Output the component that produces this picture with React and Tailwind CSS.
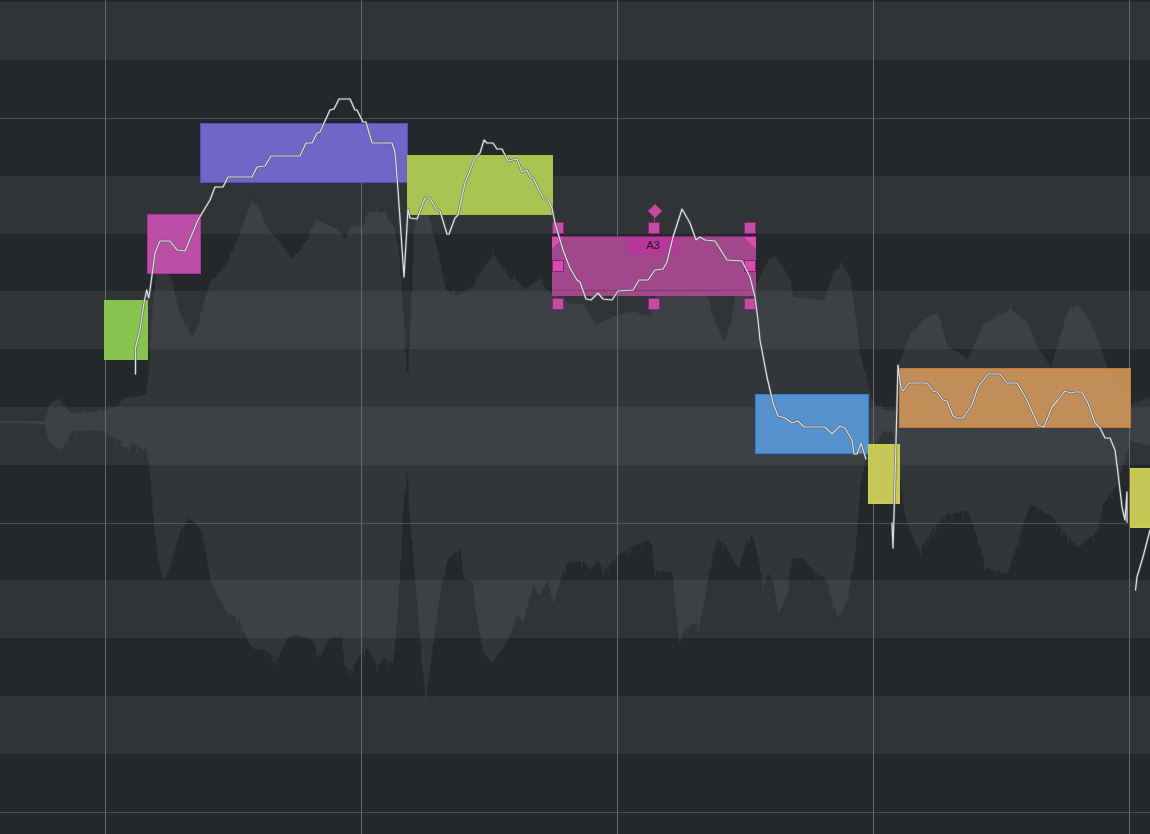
const TOP = [[0,421],[44,421],[46,412],[50,404],[58,399],[64,406],[70,414],[100,412],[105,410],[118,406],[122,399],[135,397],[145,395],[148,375],[150,340],[152,310],[155,280],[158,268],[165,268],[172,283],[178,310],[185,328],[192,337],[198,325],[204,300],[210,282],[220,272],[227,263],[240,233],[250,203],[257,205],[267,230],[277,240],[292,260],[307,240],[315,220],[337,230],[345,240],[350,227],[363,227],[368,212],[383,213],[393,227],[398,247],[403,320],[407,385],[411,300],[414,225],[417,213],[427,213],[437,250],[445,290],[455,297],[473,287],[483,268],[493,255],[510,280],[515,280],[525,290],[538,280],[548,292],[570,305],[583,305],[595,326],[610,318],[630,312],[650,317],[655,297],[665,280],[678,260],[690,290],[707,297],[712,315],[723,343],[730,325],[735,295],[743,290],[757,283],[768,260],[775,257],[790,280],[792,297],[823,302],[833,273],[842,265],[850,280],[855,317],[860,357],[868,387],[873,403],[883,410],[897,412],[898,367],[907,340],[923,320],[937,313],[947,347],[960,355],[967,360],[983,325],[1010,310],[1027,323],[1035,343],[1050,368],[1067,313],[1077,305],[1090,323],[1100,347],[1107,370],[1120,390],[1130,405],[1150,397]];

const BOTTOM = [[0,423],[44,424],[48,440],[55,445],[58,450],[62,447],[68,436],[72,430],[100,430],[105,433],[120,440],[122,447],[135,443],[142,450],[145,446],[148,462],[150,480],[153,520],[158,560],[162,577],[165,577],[170,565],[180,530],[188,518],[195,522],[200,530],[204,545],[210,580],[227,613],[238,617],[247,640],[253,648],[265,650],[277,658],[287,637],[297,633],[312,640],[320,655],[330,637],[342,637],[343,663],[350,670],[360,653],[367,647],[377,665],[383,657],[393,662],[398,600],[403,500],[407,463],[408,500],[417,607],[425,702],[433,640],[442,577],[448,557],[460,548],[463,578],[472,580],[475,610],[483,653],[492,662],[505,643],[512,628],[517,613],[522,623],[533,583],[538,595],[547,580],[553,603],[560,578],[567,562],[583,560],[590,570],[597,560],[603,570],[617,555],[627,548],[647,539],[652,545],[653,570],[672,572],[675,607],[679,644],[683,630],[692,623],[699,624],[707,583],[710,560],[717,539],[723,542],[738,568],[748,533],[753,538],[759,563],[762,588],[768,573],[773,583],[778,613],[787,593],[788,577],[792,558],[802,557],[810,567],[823,577],[827,583],[837,618],[847,600],[850,577],[855,550],[860,483],[865,460],[883,430],[897,432],[900,480],[903,507],[907,523],[918,550],[937,523],[947,513],[967,510],[977,537],[985,567],[1007,573],[1023,523],[1030,503],[1053,517],[1060,527],[1077,547],[1097,530],[1103,503],[1117,483],[1130,440],[1150,445]];

const CURVES = [
  "M135.5 374L135.5 348L140 330L144 303L146.7 290L148.7 298L150 290L155 253L160 241L170 241L177 250L185 251L198 220L210 200L215 187L223 187L228 177L252 177L257 167L265 166L271 156L300 156L306 143L312 143L317 133L320 132L330 110L334 109L339 99L350 99L355 110L357 110L363 122L366 122L372 143L392 143L395 152L398 190L404 277L408 209L410 218L417 219L425 198L430 198L436 209L440 211L447 234L449 234L455 218L458 215L465 183L475 158L480 153L484 140L487 143L493 143L497 149L502 149L508 161L517 159L522 172L527 170L530 177L533 178L543 198L547 198L552 208L555 223L558 233L563 250L570 268L577 280L580 282L586 299L591 300L598 293L603 299L612 300L618 291L633 290L639 280L648 280L655 270L663 269L667 262L673 237L682 209L690 223L696 240L700 237L705 240L715 241L727 260L742 261L750 277L755 297L758 320L760 340L767 377L773 403L778 416L785 418L792 423L798 421L804 427L825 427L832 434L840 426L845 428L852 440L854 454L857 454L861 443L866 459",
  "M892 523L893 548L895 480L898 365L901 388L903 391L909 383L927 383L933 391L937 392L943 400L947 401L953 416L957 418L963 418L972 405L978 387L988 374L1000 374L1007 383L1017 383L1027 400L1038 425L1044 427L1052 407L1058 400L1065 391L1070 393L1075 392L1082 392L1088 403L1095 423L1100 428L1105 438L1110 438L1115 450L1118 473L1122 507L1125 520L1127 492L1127 522",
  "M1135.5 590L1137 577L1143 557L1150 530",
];

const ROWS = [
  { key: 0, cls: "h-[2px] bg-[#25282a]" },
  { key: 1, cls: "h-[58px] bg-[#303437]" },
  { key: 2, cls: "h-[58px] bg-[#25282a]" },
  { key: 3, cls: "h-[58px] bg-[#25282a] border-t border-[#4a4d50]" },
  { key: 4, cls: "h-[58px] bg-[#303437]" },
  { key: 5, cls: "h-[57px] bg-[#25282a]" },
  { key: 6, cls: "h-[58px] bg-[#303437]" },
  { key: 7, cls: "h-[58px] bg-[#25282a]" },
  { key: 8, cls: "h-[58px] bg-[#303437]" },
  { key: 9, cls: "h-[58px] bg-[#25282a]" },
  { key: 10, cls: "h-[57px] bg-[#25282a] border-t border-[#4a4d50]" },
  { key: 11, cls: "h-[58px] bg-[#303437]" },
  { key: 12, cls: "h-[58px] bg-[#25282a]" },
  { key: 13, cls: "h-[58px] bg-[#303437]" },
  { key: 14, cls: "h-[58px] bg-[#25282a]" },
  { key: 15, cls: "flex-1 bg-[#25282a] border-t border-[#4a4d50]" },
];

const NOTES = [
  "left-[104px] top-[300px] w-[44px] h-[60px] bg-[#88c34f] border-[#88c34f]",
  "left-[147px] top-[214px] w-[54px] h-[60px] bg-[#c550ad]/95 border-[#b52f9c]",
  "left-[200px] top-[123px] w-[208px] h-[60px] bg-[#7568d0]/95 border-[#5a47c8]",
  "left-[407px] top-[155px] w-[146px] h-[60px] bg-[#afcc53]/95 border-[#a9c63e]",
  "left-[755px] top-[394px] w-[114px] h-[60px] bg-[#5697d6]/95 border-[#2f7fd0]",
  "left-[868px] top-[444px] w-[32px] h-[60px] bg-[#cfd058]/95 border-[#cfd04a]",
  "left-[899px] top-[368px] w-[232px] h-[60px] bg-[#c9925a]/95 border-[#c7772e]",
  "left-[1130px] top-[468px] w-[32px] h-[60px] bg-[#cfd058]/95 border-[#cfd04a]",
];

const HANDLES = [
  "left-[552px] top-[222px] bg-[#c24fa5]",
  "left-[648px] top-[222px] bg-[#c24fa5]",
  "left-[744px] top-[222px] bg-[#c24fa5]",
  "left-[552px] top-[260px] bg-[#d94ab3]",
  "left-[744px] top-[260px] bg-[#d94ab3]",
  "left-[552px] top-[298px] bg-[#c24fa5]",
  "left-[648px] top-[298px] bg-[#c24fa5]",
  "left-[744px] top-[298px] bg-[#c24fa5]",
];

function lerp(list, x) {
  for (let i = 1; i < list.length; i++) {
    if (x <= list[i][0]) {
      const [x0, y0] = list[i - 1];
      const [x1, y1] = list[i];
      return x1 === x0 ? y1 : y0 + ((y1 - y0) * (x - x0)) / (x1 - x0);
    }
  }
  return list[list.length - 1][1];
}

function noise(n) {
  const s = Math.sin(n * 127.1) * 43758.5453;
  return s - Math.floor(s);
}

function wavePoints() {
  const top = [];
  const bottom = [];
  for (let i = 0; i <= 920; i++) {
    const x = i * 1.25;
    const active = x > 46;
    const a = active ? noise(i) : 0;
    const b = active ? noise(i + 5000) : 0;
    const spikeTop = a > 0.95 ? 5 : a * 1.4;
    const spikeBottom = b > 0.94 ? 8 : b * 1.6;
    top.push(`${x},${(lerp(TOP, x) - spikeTop).toFixed(1)}`, `${x + 1.25},${(lerp(TOP, x) - spikeTop).toFixed(1)}`);
    bottom.push(`${x},${(lerp(BOTTOM, x) + spikeBottom).toFixed(1)}`, `${x + 1.25},${(lerp(BOTTOM, x) + spikeBottom).toFixed(1)}`);
  }
  return top.concat(bottom.reverse()).join(" ");
}

export default function App() {
  return (
    <div className="relative w-[1150px] h-[834px] overflow-hidden bg-[#25282a] font-['Liberation_Sans',sans-serif]">
      <div className="flex flex-col h-full">
        {ROWS.map((r) => (
          <div key={r.key} className={`box-border ${r.cls}`} />
        ))}
      </div>

      <svg className="absolute inset-0" width="1150" height="834" viewBox="0 0 1150 834">
        <polygon points={wavePoints()} fill="#eef2ff" fillOpacity="0.07" />
        {[105, 361, 617, 873, 1129].map((x) => (
          <line key={x} x1={x + 0.5} x2={x + 0.5} y1="0" y2="834" stroke="#63666a" strokeWidth="1" />
        ))}
      </svg>

      {NOTES.map((n) => (
        <div key={n} className={`absolute box-border border ${n}`} />
      ))}

      <div className="absolute left-[552px] top-[236px] w-[204px] h-[60px] box-border border-t border-[#8d1f78] bg-[#b04a97]/90">
        <div className="absolute left-[76px] top-0 w-[50px] h-[17px] bg-[#b8379c] flex items-center justify-center text-[11px] text-[#171717]">
          A3
        </div>
        <div className="absolute left-0 right-0 top-[53px] border-t border-dotted border-[#6f3a68]" />
        <div className="absolute left-[28px] right-[32px] top-[53px] border-t border-[#6d4468]" />
        <svg className="absolute left-0 top-0" width="204" height="14" viewBox="0 0 204 14">
          <polygon points="0,0 12,0 0,12" fill="#d94ab3" />
          <polygon points="192,0 204,0 204,12" fill="#d94ab3" />
        </svg>
      </div>

      {HANDLES.map((h) => (
        <div key={h} className={`absolute box-border w-[12px] h-[12px] border border-[#8d2275] ${h}`} />
      ))}

      <div className="absolute left-[654px] top-[216px] w-px h-[6px] bg-[#a8368f]" />
      <div className="absolute left-[650px] top-[206px] w-[10px] h-[10px] rotate-45 bg-[#c3479f]" />

      <svg className="absolute inset-0" width="1150" height="834" viewBox="0 0 1150 834" fill="none">
        {CURVES.map((d) => (
          <g key={d} strokeLinejoin="round" strokeLinecap="round">
            <path d={d} stroke="#5a5d61" strokeOpacity="0.7" strokeWidth="2.6" />
            <path d={d} stroke="#dcdedf" strokeWidth="1.2" />
          </g>
        ))}
      </svg>
    </div>
  );
}
